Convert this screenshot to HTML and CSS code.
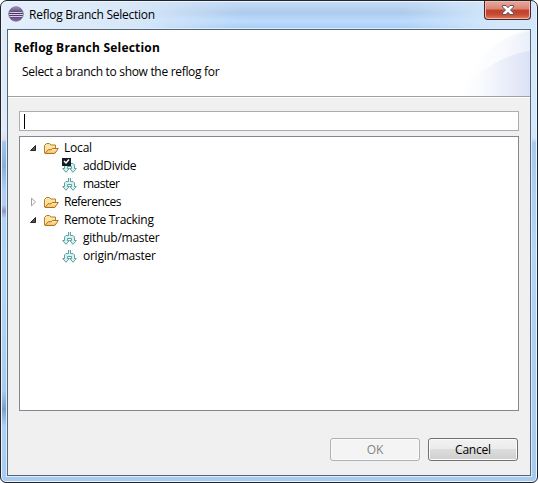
FILE: index.html
```html
<!DOCTYPE html>
<html lang="en">
<head>
<meta charset="utf-8">
<title>Reflog Branch Selection</title>
<link rel="stylesheet" href="styles.css">
</head>
<body>
<svg class="defs" width="0" height="0">
  <defs>
    <linearGradient id="gold" x1="0" y1="0" x2="0" y2="1"><stop offset="0" stop-color="#fff0bc"/><stop offset="1" stop-color="#f3bd60"/></linearGradient>
    <linearGradient id="orb" x1="0" y1="0" x2="0" y2="1"><stop offset="0" stop-color="#a594c2"/><stop offset=".5" stop-color="#43305f"/><stop offset="1" stop-color="#8b70ad"/></linearGradient>
    <linearGradient id="arc" x1="0" y1="0" x2="1" y2="0"><stop offset="0" stop-color="#fff"/><stop offset=".3" stop-color="#fafbfe"/><stop offset="1" stop-color="#dce2f6"/></linearGradient>
    <linearGradient id="arc2" x1="0" y1="0" x2="1" y2="0"><stop offset="0" stop-color="#fff"/><stop offset=".4" stop-color="#fafbfe"/><stop offset="1" stop-color="#e8edf9"/></linearGradient>
    <symbol id="folder" viewBox="0 0 16 16">
      <path d="M1.500 13V5.500L3.500 3.500H6.500L8 5H12.500V8.500" fill="#fbe3a4" stroke="#b87c2c"/>
      <path d="M2 13.500L5 9.800H8L9.500 8.500H15.300L11.800 13.500Z" fill="url(#gold)" stroke="#b0701c"/>
    </symbol>
    <symbol id="branch" viewBox="0 0 16 16">
      <path d="M6.500 2V5.500H4L2.500 7V10.500H.7L4 14.300 7.200 10.500H5.500V8.500H9.500V10.500H7.800L11 14.300 14.300 10.500H12.500V7L11 5.500H8.500V2" fill="#d3f3f1" stroke="#5a9b9e" stroke-width=".95"/>
    </symbol>
    <symbol id="open" viewBox="0 0 8 8"><path d="M6.500 1.500V6.500H1.500Z" fill="#505050" stroke="#262626"/></symbol>
    <symbol id="closed" viewBox="0 0 8 10"><path d="M1.500 1.200V8.800L5.500 5Z" fill="#fff" stroke="#a0a0a0"/></symbol>
  </defs>
</svg>
<div class="window">
  <header class="titlebar">
    <svg class="logo" viewBox="0 0 16 16"><circle cx="8" cy="8" r="7.300" fill="url(#orb)" stroke="#78688f" stroke-width=".7"/><path d="M1.500 6.500H14.500M1 8.500H15M1.500 10.500H14.500" stroke="#d4cae3"/></svg>
    <span class="title">Reflog Branch Selection</span>
    <button class="close" aria-label="Close"><svg viewBox="0 0 12 10"><path d="M.5.500H4L6 2.700 8 .5H11.500V2L8.500 5 11.500 8V9.500H8L6 7.300 4 9.500H.5V8L3.500 5 .5 2Z" fill="#fff" stroke="#54566b"/></svg></button>
  </header>
  <main class="client">
    <section class="banner">
      <div class="copy"><h1>Reflog Branch Selection</h1><p>Select a branch to show the reflog for</p></div>
      <svg class="swoosh" viewBox="0 0 74 66"><path d="M2 66C15 33 39 7 73 0H74V66Z" fill="url(#arc2)" opacity=".6"/><path d="M30 40C42 19 54 6 74 1V66H25Z" fill="url(#arc2)" opacity=".8"/><path d="M3 66C18 43 45 25 74 21V66Z" fill="url(#arc)"/></svg>
    </section>
    <section class="content">
      <div class="filter"><span class="caret"></span></div>
      <ul class="tree">
        <li><svg class="twist"><use href="#open"/></svg><svg class="icon"><use href="#folder"/></svg><span class="t-local">Local</span></li>
        <li class="leaf"><svg class="icon" viewBox="0 0 16 16"><use href="#branch"/><path d="M0 0H9V8H0Z" fill="#151c25"/><path d="M2 3L4 5 7 1.500" fill="none" stroke="#fff" stroke-width="1.500"/></svg><span class="t-add">addDivide</span></li>
        <li class="leaf"><svg class="icon"><use href="#branch"/></svg><span class="t-master">master</span></li>
        <li><svg class="twist shut"><use href="#closed"/></svg><svg class="icon"><use href="#folder"/></svg><span class="t-refs">References</span></li>
        <li><svg class="twist"><use href="#open"/></svg><svg class="icon"><use href="#folder"/></svg><span class="t-remote">Remote Tracking</span></li>
        <li class="leaf"><svg class="icon"><use href="#branch"/></svg><span class="t-github">github/master</span></li>
        <li class="leaf"><svg class="icon"><use href="#branch"/></svg><span class="t-origin">origin/master</span></li>
      </ul>
      <footer><button class="btn" disabled>OK</button><button class="btn active">Cancel</button></footer>
    </section>
  </main>
</div>
</body>
</html>
```
FILE: styles.css
```css
* { box-sizing: border-box; }
body { margin: 0; background: #fff; font: 12px/18px "Open Sans", "Noto Sans", sans-serif; color: #000; overflow: hidden; }
.defs { position: absolute; }
.window {
  width: 538px; height: 483px; padding: 0 6px 6px;
  display: flex; flex-direction: column;
  border: 1px solid #20242d; border-radius: 7px 7px 6px 6px;
  box-shadow: inset 0 0 0 1px #eaf5ff;
  background:
    linear-gradient(90deg, #e4effb 0, #d7e7f8 25%, transparent 45%, transparent 75%, #d3e7fa 92%) top / 100% 29px no-repeat,
    linear-gradient(#c5dcf6 0, #aecbec 12px, #bbdcff 20px, #a9caee 29px) top / 100% 29px no-repeat,
    linear-gradient(#dce9f8 0, #e2e9f7 130px, #e0d9ea 139px, #a6c4e8 141px, #8aaed9 165px, #afd0f5 190px, #b2cef2 204px, #8f95bd 210px, #b2d2f6 217px, #b5d5f8 290px, #a8caee 390px, #7c9fca 408px, #add0f5 425px, #a9caee 100%) left / 7px 100% no-repeat,
    linear-gradient(#d7eafb, #d2e8fa 137px, #a8c9ee 142px, #b5d5f7 250px, #a8c9ed) right / 7px 100% no-repeat,
    #aacbf0;
}
.titlebar { height: 28px; display: flex; align-items: flex-start; flex: none; }
.logo { width: 16px; height: 16px; margin: 5px 0 0 1px; }
.title { margin: 5px 0 0 5px; flex: 1; white-space: nowrap; letter-spacing: -.25px; }
.close { width: 47px; height: 19px; padding: 0 0 0 1px; display: grid; place-items: center; border: 1px solid #54212b; border-top: 0; border-radius: 0 0 4px 4px; box-shadow: inset 0 0 0 1px #efb8ac; background: linear-gradient(#e9aa9c, #d98474 45%, #c1412c 50%, #c74a31 75%, #dc8063); }
.close svg { width: 12px; height: 10px; }
.client { flex: 1; border: 1px solid #566477; box-shadow: 0 0 0 1px #d9edff; background: #f0f0f0; display: flex; flex-direction: column; }
.banner { height: 67px; flex: none; display: flex; justify-content: space-between; background: #fff; border-bottom: 1px solid #a0a0a0; box-shadow: 0 1px #fff; }
.copy { padding: 9px 0 0 6px; }
h1 { margin: 0; font-size: 12px; line-height: 18px; font-weight: 700; letter-spacing: .21px; }
.copy p { margin: 6px 0 0 8px; line-height: 18px; letter-spacing: -.31px; }
.swoosh { width: 74px; height: 66px; }
.content { padding: 14px 11px 13px; display: flex; flex-direction: column; }
.filter { height: 20px; border: 1px solid #abadb3; background: #fff; padding: 2px 4px; }
.caret { display: block; width: 1px; height: 15px; background: #000; }
.tree { list-style: none; margin: 5px 0 27px; padding: 2px 0 0 9px; height: 275px; background: #fff; border: 1px solid #828790; }
.tree li { height: 18px; display: flex; align-items: center; }
.tree li span { margin-top: -1px; }
.tree .leaf { padding-left: 33px; }
.twist { width: 8px; height: 8px; margin: 0 6px 0 0; }
.twist.shut { height: 10px; margin-left: 1px; margin-right: 5px; }
.icon { width: 16px; height: 16px; margin-right: 5px; }
.t-local { letter-spacing: -.2px; }
.t-add { letter-spacing: -.34px; }
.t-master { letter-spacing: -.5px; }
.t-refs { letter-spacing: -.52px; }
.t-remote { letter-spacing: -.27px; }
.t-github, .t-origin { letter-spacing: -.25px; }
footer { display: flex; justify-content: flex-end; gap: 8px; padding-right: 1px; }
.btn { width: 90px; height: 23px; padding: 0; font: inherit; line-height: 20px; color: #838383; border: 1px solid #adb2b5; border-radius: 3px; background: #f4f4f4; box-shadow: inset 0 0 0 1px #fafafa; }
.btn.active { color: #000; border-color: #707070; background: linear-gradient(#f2f2f2, #ebebeb 49%, #dddddd 50%, #cfcfcf); box-shadow: inset 0 0 0 1px #fbfbfb; letter-spacing: -.2px; }
```
